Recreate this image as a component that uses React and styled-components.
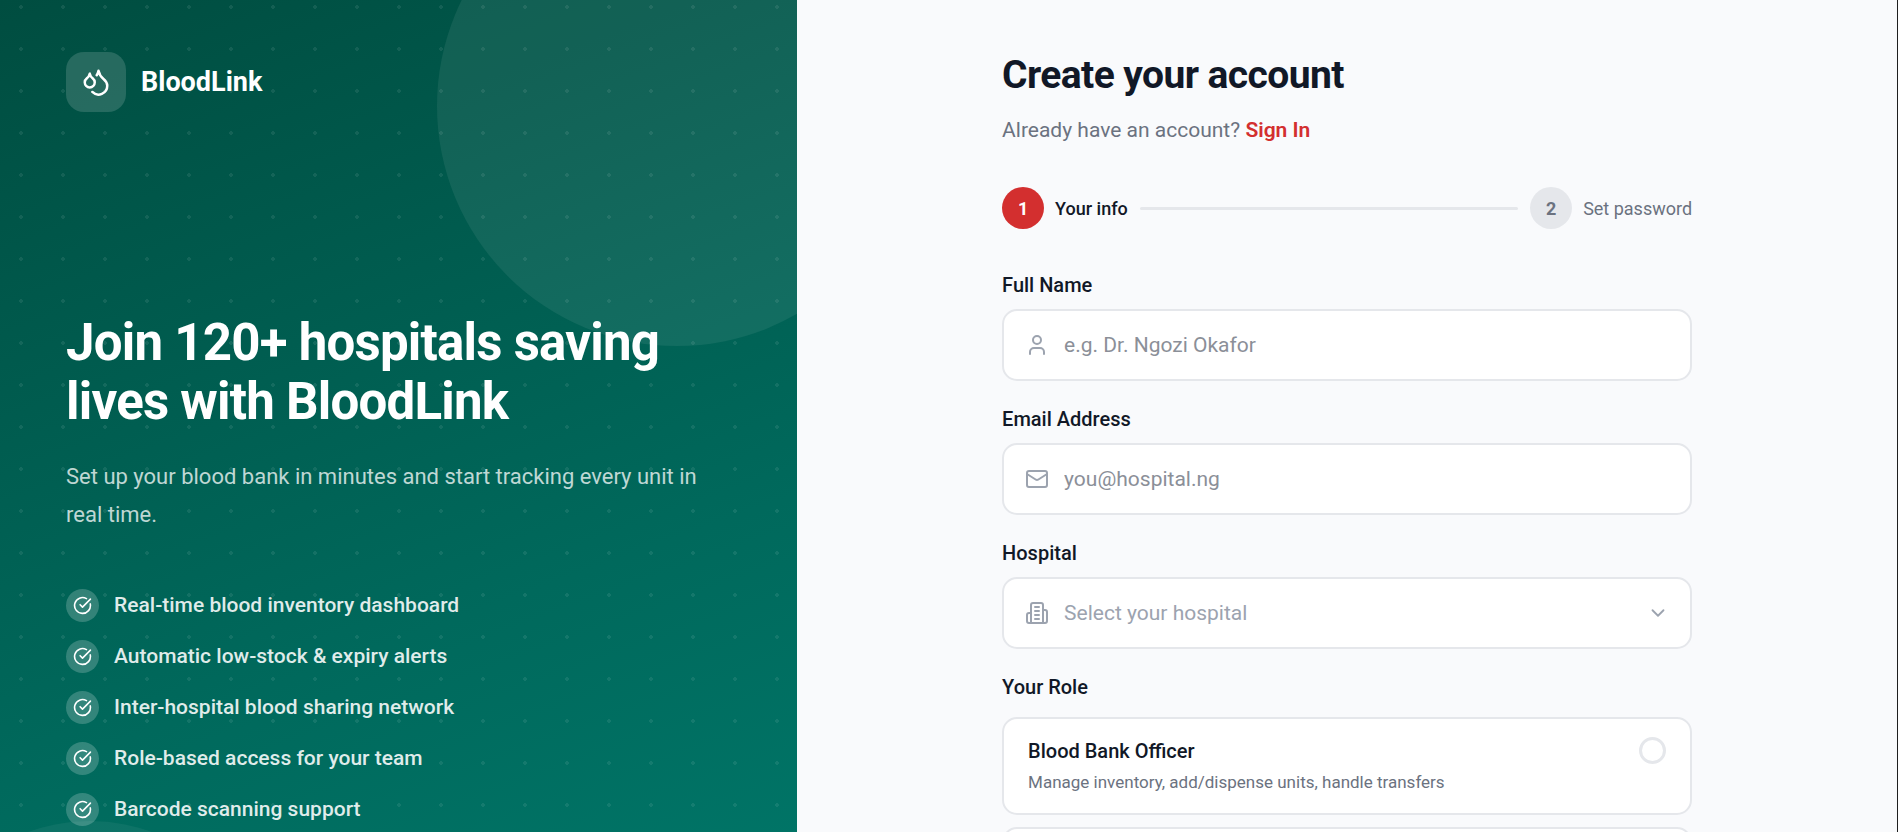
import { useState } from 'react'
import styled, { createGlobalStyle } from 'styled-components'
import { Droplets, CircleCheckBig, User, Mail, ChevronDown } from 'lucide-react'

const GlobalStyle = createGlobalStyle`
  * { box-sizing: border-box; }
  body {
    margin: 0;
    font-family: Roboto, sans-serif;
    color: #111827;
    background: #f9fafc;
  }
  h1, h2, p, ul, fieldset { margin: 0; padding: 0; border: 0; }
`

const Page = styled.div`
  display: flex;
  height: 100vh;
  overflow: hidden;
`

const Hero = styled.aside`
  position: relative;
  flex: 0 0 42%;
  overflow: hidden;
  padding: 52px 66px;
  color: #fff;
  background: linear-gradient(160deg, #004d40 0%, #00695c 70%, #00796b 115%);
`

const Dots = styled.div`
  position: absolute;
  inset: 0;
  background-image: radial-gradient(circle, rgba(255, 255, 255, 0.08) 2px, transparent 2px);
  background-size: 42px 42px;
  background-position: 0 -14px;
`

const BigCircle = styled.div`
  position: absolute;
  top: -134px;
  right: -120px;
  width: 480px;
  height: 480px;
  border-radius: 50%;
  background: rgba(255, 255, 255, 0.07);
`

const SmallCircle = styled(BigCircle)`
  top: auto;
  right: auto;
  bottom: -349px;
  left: -90px;
  width: 360px;
  height: 360px;
  background: rgba(255, 255, 255, 0.05);
`

const HeroContent = styled.div`
  position: relative;
`

const Brand = styled.div`
  display: flex;
  align-items: center;
  gap: 15px;
  font-size: 27px;
  font-weight: 700;
`

const BrandIcon = styled.span`
  display: flex;
  align-items: center;
  justify-content: center;
  width: 60px;
  height: 60px;
  border-radius: 18px;
  background: rgba(255, 255, 255, 0.15);
`

const Headline = styled.h2`
  margin-top: 201px;
  font-size: 51px;
  line-height: 59px;
  font-weight: 700;
  letter-spacing: -0.015em;
`

const Lead = styled.p`
  margin-top: 27px;
  font-size: 22px;
  line-height: 38px;
  color: rgba(255, 255, 255, 0.75);
`

const Features = styled.ul`
  display: flex;
  flex-direction: column;
  gap: 18px;
  margin-top: 55px;
  list-style: none;
`

const Feature = styled.li`
  display: flex;
  align-items: center;
  gap: 15px;
  font-size: 21px;
  line-height: 33px;
  font-weight: 500;
  color: rgba(255, 255, 255, 0.88);
`

const Check = styled.span`
  display: flex;
  align-items: center;
  justify-content: center;
  width: 33px;
  height: 33px;
  border-radius: 50%;
  color: #fff;
  background: rgba(255, 255, 255, 0.2);
`

const Main = styled.main`
  flex: 1;
  display: flex;
  justify-content: center;
  align-items: flex-start;
  padding: 52px 60px;
  overflow-y: auto;
  scrollbar-width: none;
  background: #f9fafc;
  border-right: 1px solid #1f1f1f;
`

const Form = styled.form`
  width: 100%;
  max-width: 690px;
`

const Title = styled.h1`
  font-size: 39px;
  line-height: 46px;
  font-weight: 700;
  letter-spacing: -0.015em;
`

const Sub = styled.p`
  margin-top: 19px;
  font-size: 21px;
  line-height: 26px;
  color: #6b7280;

  a {
    color: #d32f2f;
    font-weight: 600;
    text-decoration: none;
  }
`

const Steps = styled.div`
  display: flex;
  align-items: center;
  gap: 12px;
  margin-top: 44px;
`

const Step = styled.div`
  display: flex;
  align-items: center;
  gap: 11px;
  font-size: 18px;
  font-weight: ${(p) => (p.$active ? 500 : 400)};
  color: ${(p) => (p.$active ? '#111827' : '#6b7280')};
`

const StepNumber = styled.span`
  display: flex;
  align-items: center;
  justify-content: center;
  width: 42px;
  height: 42px;
  border-radius: 50%;
  font-weight: 700;
  color: ${(p) => (p.$active ? '#fff' : '#6b7280')};
  background: ${(p) => (p.$active ? '#d32f2f' : '#e5e7eb')};
`

const StepLine = styled.div`
  flex: 1;
  height: 3px;
  border-radius: 2px;
  background: #e5e7eb;
`

const Fields = styled.div`
  display: flex;
  flex-direction: column;
  gap: 26px;
  margin-top: 44px;
`

const Label = styled.label`
  display: block;
  margin-bottom: 12px;
  font-size: 20px;
  line-height: 24px;
  font-weight: 500;
`

const Control = styled.div`
  display: flex;
  align-items: center;
  gap: 15px;
  height: 72px;
  padding: 0 21px;
  border: 2px solid #e5e7eb;
  border-radius: 15px;
  background: #fff;
  color: #9ca3af;

  svg { flex: none; }

  input, select {
    flex: 1;
    min-width: 0;
    height: 100%;
    padding: 0;
    border: 0;
    outline: none;
    appearance: none;
    background: transparent;
    font: 400 21px Roboto, sans-serif;
    color: #111827;
  }
  input::placeholder { color: #8b8f98; }
  select { color: #9ca3af; }
`

const RoleGroup = styled.fieldset`
  min-width: 0;

  legend {
    margin-bottom: 18px;
    padding: 0;
    font-size: 20px;
    line-height: 24px;
    font-weight: 500;
  }
`

const RoleCard = styled.label`
  display: flex;
  justify-content: space-between;
  align-items: flex-start;
  min-height: 98px;
  margin-bottom: 12px;
  padding: 18px 24px;
  border: 2px solid #e5e7eb;
  border-radius: 15px;
  background: #fff;

  input {
    appearance: none;
    flex: none;
    width: 27px;
    height: 27px;
    margin: 0;
    border: 3px solid #e5e7eb;
    border-radius: 50%;
  }
  input:checked { border: 8px solid #d32f2f; }
`

const RoleName = styled.span`
  display: block;
  font-size: 20px;
  line-height: 28px;
  font-weight: 500;
`

const RoleText = styled.span`
  display: block;
  margin-top: 5px;
  font-size: 17px;
  line-height: 24px;
  color: #6b7280;
`

const features = [
  'Real-time blood inventory dashboard',
  'Automatic low-stock & expiry alerts',
  'Inter-hospital blood sharing network',
  'Role-based access for your team',
  'Barcode scanning support',
]

const roles = [
  { id: 'officer', name: 'Blood Bank Officer', text: 'Manage inventory, add/dispense units, handle transfers' },
  { id: 'admin', name: '', text: '' },
]

function BuildingIcon() {
  return (
    <svg width="24" height="24" viewBox="0 0 24 24" fill="none" stroke="currentColor" strokeWidth="2" strokeLinecap="round" strokeLinejoin="round">
      <path d="M6 22V4a2 2 0 0 1 2-2h8a2 2 0 0 1 2 2v18Z" />
      <path d="M6 12H4a2 2 0 0 0-2 2v6a2 2 0 0 0 2 2h2" />
      <path d="M18 9h2a2 2 0 0 1 2 2v9a2 2 0 0 1-2 2h-2" />
      <path d="M10 6h4M10 10h4M10 14h4M10 18h4" />
    </svg>
  )
}

function App() {
  const [role, setRole] = useState('')

  return (
    <Page>
      <GlobalStyle />
      <Hero>
        <BigCircle />
        <SmallCircle />
        <Dots />
        <HeroContent>
          <Brand>
            <BrandIcon><Droplets size={30} /></BrandIcon>
            BloodLink
          </Brand>
          <Headline>Join 120+ hospitals saving lives with BloodLink</Headline>
          <Lead>Set up your blood bank in minutes and start tracking every unit in real time.</Lead>
          <Features>
            {features.map((f) => (
              <Feature key={f}>
                <Check><CircleCheckBig size={19} /></Check>
                {f}
              </Feature>
            ))}
          </Features>
        </HeroContent>
      </Hero>

      <Main>
        <Form>
          <Title>Create your account</Title>
          <Sub>Already have an account? <a href="#signin">Sign In</a></Sub>
          <Steps>
            <Step $active><StepNumber $active>1</StepNumber>Your info</Step>
            <StepLine />
            <Step><StepNumber>2</StepNumber>Set password</Step>
          </Steps>

          <Fields>
            <div>
              <Label htmlFor="name">Full Name</Label>
              <Control>
                <User size={24} />
                <input id="name" type="text" placeholder="e.g. Dr. Ngozi Okafor" />
              </Control>
            </div>
            <div>
              <Label htmlFor="email">Email Address</Label>
              <Control>
                <Mail size={24} />
                <input id="email" type="email" placeholder="you@hospital.ng" />
              </Control>
            </div>
            <div>
              <Label htmlFor="hospital">Hospital</Label>
              <Control>
                <BuildingIcon />
                <select id="hospital">
                  <option>Select your hospital</option>
                </select>
                <ChevronDown size={22} />
              </Control>
            </div>
            <RoleGroup>
              <legend>Your Role</legend>
              {roles.map((r) => (
                <RoleCard key={r.id}>
                  <span>
                    <RoleName>{r.name}</RoleName>
                    <RoleText>{r.text}</RoleText>
                  </span>
                  <input type="radio" name="role" checked={role === r.id} onChange={() => setRole(r.id)} />
                </RoleCard>
              ))}
            </RoleGroup>
          </Fields>
        </Form>
      </Main>
    </Page>
  )
}

export default App
